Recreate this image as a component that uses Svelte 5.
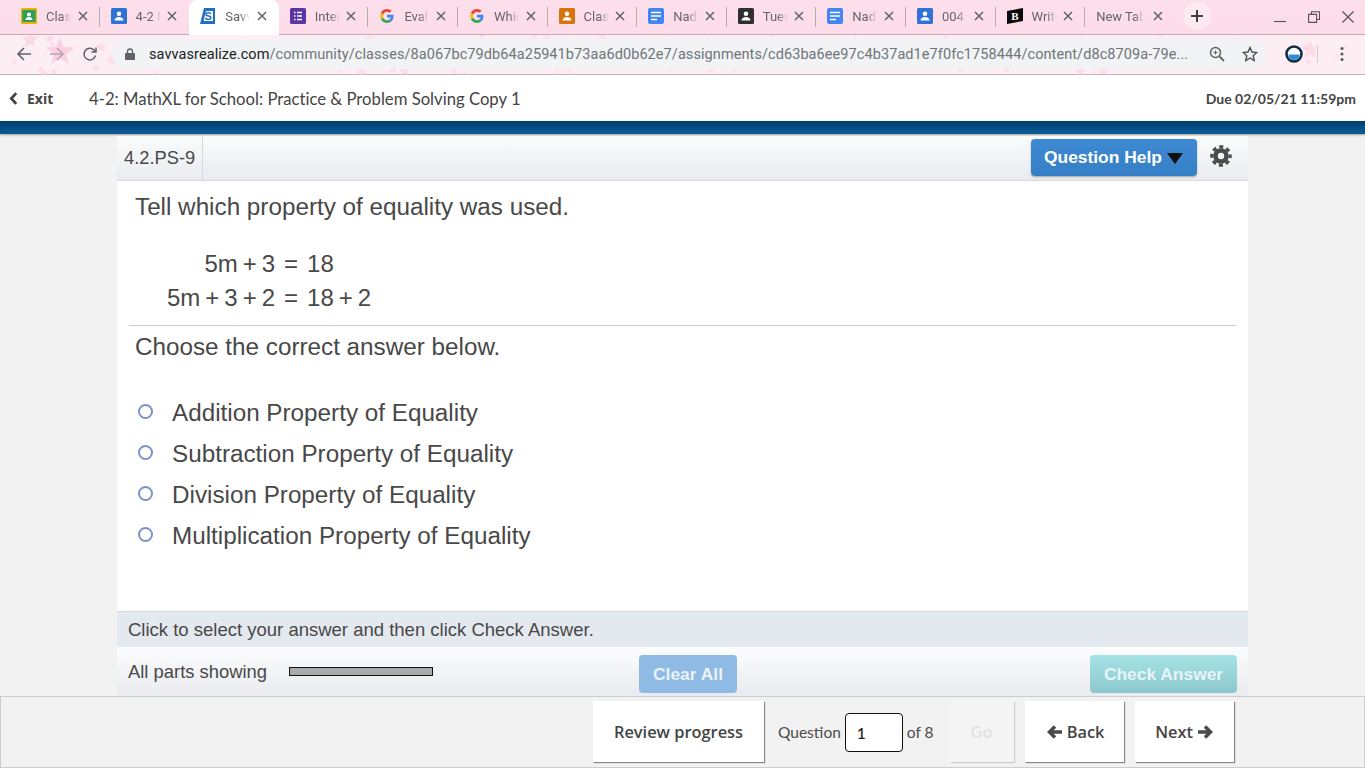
<script>
  const tabs = [
    { icon: 'classroom', title: 'Classes' },
    { icon: 'blue', title: '4-2 MathXL' },
    { icon: 'savvas', title: 'Savvas', active: true },
    { icon: 'forms', title: 'Interactive' },
    { icon: 'google', title: 'Evaluate' },
    { icon: 'google', title: 'Which' },
    { icon: 'orange', title: 'Classes' },
    { icon: 'docs', title: 'Nadia' },
    { icon: 'dark', title: 'Tuesday' },
    { icon: 'docs', title: 'Nadia' },
    { icon: 'blue', title: '004' },
    { icon: 'brainly', title: 'Write' },
    { icon: 'none', title: 'New Tab' }
  ];

  const answers = [
    'Addition Property of Equality',
    'Subtraction Property of Equality',
    'Division Property of Equality',
    'Multiplication Property of Equality'
  ];

  // scattered wallpaper stars behind the toolbar
  const stars = [];
  let seed = 17;
  const rnd = () => {
    seed = (seed * 9301 + 49297) % 233280;
    return seed / 233280;
  };
  for (let i = 0; i < 90; i++) {
    stars.push({ x: rnd() * 1365, y: 34 + rnd() * 40, r: 2 + rnd() * 5, o: 0.2 + rnd() * 0.4 });
  }
  stars.push({ x: 60, y: 52, r: 15, o: 0.8 }, { x: 30, y: 40, r: 9, o: 0.6 }, { x: 1310, y: 50, r: 10, o: 0.5 });

  const starPoints = (s) => {
    const pts = [];
    for (let i = 0; i < 10; i++) {
      const a = (Math.PI / 5) * i - Math.PI / 2;
      const d = i % 2 ? s.r * 0.42 : s.r;
      pts.push((s.x + Math.cos(a) * d).toFixed(1) + ',' + (s.y + Math.sin(a) * d).toFixed(1));
    }
    return pts.join(' ');
  };
</script>

<div class="page">
  <div class="browser">
    <svg class="wallpaper" width="1365" height="75" aria-hidden="true">
      {#each stars as s}
        <polygon points={starPoints(s)} fill="#f9c9dc" opacity={s.o} />
      {/each}
    </svg>

    <div class="tabstrip">
      {#each tabs as tab, i}
        <div class="tab" class:active={tab.active} class:nosep={tab.active || tabs[i + 1]?.active || i === tabs.length - 1}>
          {#if tab.icon !== 'none'}
            <svg class="favicon" viewBox="0 0 16 16" width="16" height="16">
              {#if tab.icon === 'classroom'}
                <rect width="16" height="16" rx="1" fill="#e3b30c" />
                <rect x="1.500" y="2" width="13" height="12" fill="#2e9e5b" />
                <circle cx="8" cy="6.500" r="2" fill="#fff" />
                <path d="M4.500 12c0-2 1.500-3 3.500-3s3.500 1 3.500 3z" fill="#fff" />
              {:else if tab.icon === 'blue' || tab.icon === 'orange' || tab.icon === 'dark'}
                <rect width="16" height="16" rx="1.500" fill={tab.icon === 'blue' ? '#2f72d8' : tab.icon === 'orange' ? '#d9730d' : '#2f2f2f'} />
                <circle cx="8" cy="5.800" r="2.300" fill="#fff" />
                <path d="M3.500 12.500c0-2.300 2-3.500 4.500-3.500s4.500 1.200 4.500 3.500z" fill="#fff" />
              {:else if tab.icon === 'savvas'}
                <path d="M4 0h11v16H0z" fill="#1f6fc4" />
                <path d="M6 3h7v10H3.500z" fill="#fff" />
                <text x="8.200" y="11.800" class="favtext">S</text>
              {:else if tab.icon === 'forms'}
                <rect width="16" height="16" rx="1.500" fill="#5b34a8" />
                <path d="M4 4.500h1.500M7 4.500h5M4 8h1.500M7 8h5M4 11.500h1.500M7 11.500h5" stroke="#fff" stroke-width="1.400" />
              {:else if tab.icon === 'docs'}
                <rect width="16" height="16" rx="2" fill="#4285f4" />
                <path d="M3 4.500h10M3 8h10M3 11.500h6" stroke="#fff" stroke-width="1.600" />
              {:else if tab.icon === 'google'}
                <path d="M14.500 8.200c0-.5 0-1-.1-1.400H8v2.700h3.700c-.2.900-.7 1.600-1.400 2.100l2.200 1.700c1.300-1.200 2-3 2-5.100z" fill="#4285f4" />
                <path d="M8 15c1.900 0 3.400-.6 4.500-1.700l-2.200-1.700c-.6.400-1.400.7-2.300.7-1.800 0-3.300-1.200-3.800-2.800L1.900 11.200C3 13.500 5.300 15 8 15z" fill="#34a853" />
                <path d="M4.200 9.500c-.3-.9-.3-1.900 0-2.800L1.900 4.900c-1 1.900-1 4.300 0 6.300z" fill="#fbbc05" />
                <path d="M8 3.800c1 0 1.900.3 2.600 1l2-2C11.400 1.700 9.800 1 8 1 5.300 1 3 2.500 1.900 4.800l2.300 1.800C4.700 5 6.200 3.800 8 3.800z" fill="#ea4335" />
              {:else if tab.icon === 'brainly'}
                <path d="M0 3l16-3v13L0 16z" fill="#0a0a0a" />
                <text x="8" y="11.500" class="favtext light">B</text>
              {/if}
            </svg>
          {/if}
          <span class="tabtitle" class:wide={tab.icon === 'none'}>{tab.title}</span>
          <svg class="tabclose" viewBox="0 0 10 10" width="10" height="10">
            <path d="M1 1l8 8M9 1l-8 8" stroke="#5f6368" stroke-width="1.500" fill="none" />
          </svg>
        </div>
      {/each}
      <div class="newtab">
        <svg viewBox="0 0 14 14" width="14" height="14"><path d="M7 1v12M1 7h12" stroke="#3c4043" stroke-width="2" /></svg>
      </div>
      <div class="winctl">
        <svg viewBox="0 0 12 12" width="12" height="12"><path d="M0 10.500h12" stroke="#555" stroke-width="1.200" /></svg>
        <svg viewBox="0 0 12 12" width="12" height="12"><path d="M3.500 3V.8h8v7.700H9M.6 3.400h8v8h-8z" stroke="#555" stroke-width="1.100" fill="none" /></svg>
        <svg viewBox="0 0 12 12" width="12" height="12"><path d="M.5.500l11 11M11.500.500l-11 11" stroke="#555" stroke-width="1.200" /></svg>
      </div>
    </div>

    <div class="toolbar">
      <svg viewBox="0 0 16 16" width="16" height="16" class="navicon"><path d="M15 8H2M8 2L2 8l6 6" stroke="#5f6368" stroke-width="1.600" fill="none" /></svg>
      <svg viewBox="0 0 16 16" width="16" height="16" class="navicon"><path d="M1 8h13M8 2l6 6-6 6" stroke="#b9a3ad" stroke-width="1.600" fill="none" /></svg>
      <svg viewBox="0 0 16 16" width="16" height="16" class="navicon"><path d="M13.500 9.500A5.800 5.800 0 1 1 12 4l1.500 1.500M14 1.500v4.500H9.500" stroke="#5f6368" stroke-width="1.500" fill="none" /></svg>
      <div class="omnibox">
        <svg viewBox="0 0 10 12" width="10" height="12"><path d="M2.500 5V3.500a2.500 2.500 0 0 1 5 0V5" stroke="#5f6368" stroke-width="1.300" fill="none" /><rect y="5" width="10" height="7" rx="1" fill="#5f6368" /></svg>
        <div class="url"><b>savvasrealize.com</b>/community/classes/8a067bc79db64a25941b73aa6d0b62e7/assignments/cd63ba6ee97c4b37ad1e7f0fc1758444/content/d8c8709a-79e...</div>
        <svg viewBox="0 0 16 16" width="16" height="16"><circle cx="6.500" cy="6.500" r="5" stroke="#5f6368" stroke-width="1.500" fill="none" /><path d="M10.500 10.500l4.500 4.500" stroke="#5f6368" stroke-width="1.800" /><path d="M4.500 6.500h4M6.500 4.500v4" stroke="#5f6368" stroke-width="1.100" /></svg>
        <svg viewBox="0 0 16 16" width="16" height="16"><path d="M8 1.500l2 4.500 4.800.5-3.600 3.200 1 4.800L8 12l-4.200 2.500 1-4.800L1.200 6.500 6 6z" stroke="#4d5156" stroke-width="1.400" fill="none" /></svg>
      </div>
      <svg class="ext" viewBox="0 0 18 18" width="18" height="18">
        <circle cx="9" cy="9" r="7.500" fill="#fff" stroke="#102a43" stroke-width="2.600" />
        <path d="M3.500 9.500h11a5.500 5.500 0 0 1-11 0z" fill="#2c8fd6" />
      </svg>
      <span class="toolsep"></span>
      <svg class="dots" viewBox="0 0 4 16" width="4" height="16"><circle cx="2" cy="2.500" r="1.500" fill="#555" /><circle cx="2" cy="8" r="1.500" fill="#555" /><circle cx="2" cy="13.500" r="1.500" fill="#555" /></svg>
    </div>
  </div>

  <header class="apphead">
    <a class="exit" href="#exit">
      <svg viewBox="0 0 8 12" width="9" height="13"><path d="M6.500 1L2 6l4.500 5" stroke="#444" stroke-width="2.600" fill="none" /></svg>
      Exit
    </a>
    <div class="assignment">4-2: MathXL for School: Practice &amp; Problem Solving Copy 1</div>
    <div class="due">Due 02/05/21 11:59pm</div>
  </header>
  <div class="bluebar"></div>

  <main class="stage">
    <section class="card">
      <div class="cardhead">
        <div class="qid">4.2.PS-9</div>
        <button class="help">Question Help <span class="caret"></span></button>
        <svg class="gear" viewBox="0 0 24 24" width="22" height="22">
          <circle cx="12" cy="12" r="10" fill="none" stroke="#4a4a4a" stroke-width="3.400" stroke-dasharray="4.400 3.454" stroke-dashoffset="2.200" />
          <circle cx="12" cy="12" r="6" fill="none" stroke="#4a4a4a" stroke-width="5" />
        </svg>
      </div>

      <div class="question">
        <p class="prompt">Tell which property of equality was used.</p>
        <div class="math">
          <span class="lhs">5m<i>+</i>3</span><span class="eq">=</span><span class="rhs">18</span>
          <span class="lhs">5m<i>+</i>3<i>+</i>2</span><span class="eq">=</span><span class="rhs">18<i>+</i>2</span>
        </div>
        <hr />
        <p class="choose">Choose the correct answer below.</p>
        <ul class="answers">
          {#each answers as a}
            <li><span class="radio"></span>{a}</li>
          {/each}
        </ul>
      </div>

      <div class="hint">Click to select your answer and then click Check Answer.</div>
      <div class="cardfoot">
        <span class="parts">All parts showing</span>
        <span class="progress"></span>
        <button class="clear">Clear All</button>
        <button class="check">Check Answer</button>
      </div>
    </section>
  </main>

  <nav class="pager">
    <button class="navbtn review">Review progress</button>
    <span class="qlabel">Question</span>
    <span class="qinput">1</span>
    <span class="qlabel">of 8</span>
    <button class="navbtn go">Go</button>
    <button class="navbtn back">
      <svg viewBox="0 0 16 14" width="16" height="14"><path d="M15 7H4M8 1.500L2.500 7 8 12.500" stroke="#4a4a4a" stroke-width="3.500" fill="none" /></svg>
      Back
    </button>
    <button class="navbtn next">
      Next
      <svg viewBox="0 0 16 14" width="16" height="14"><path d="M1 7h11M8 1.500L13.500 7 8 12.500" stroke="#4a4a4a" stroke-width="3.500" fill="none" /></svg>
    </button>
  </nav>
</div>

<style>
  :global(body) {
    background: #f2f2f2;
    overflow: hidden;
  }

  .page {
    display: flex;
    flex-direction: column;
    width: 1365px;
    height: 768px;
    overflow: hidden;
    font-family: "Liberation Sans", Arial, sans-serif;
    color: #484848;
  }

  /* browser chrome */
  .browser {
    position: relative;
    height: 75px;
    flex: none;
    background: #fdeef4;
    border-bottom: 1px solid #bfb4b9;
    box-sizing: border-box;
    font-family: Roboto, sans-serif;
  }

  .wallpaper {
    position: absolute;
    left: 0;
    top: 0;
  }

  .tabstrip {
    position: relative;
    display: flex;
    height: 35px;
    padding-left: 10px;
    box-sizing: border-box;
    background: linear-gradient(#fddfeb, #fcdce9);
    border-bottom: 1px solid #c2adb5;
  }

  .tab {
    position: relative;
    display: flex;
    align-items: center;
    width: 89.6px;
    height: 34px;
    flex: none;
    padding: 0 0 2px 11px;
    box-sizing: border-box;
    font-size: 13px;
    color: #666;
  }

  .tab::after {
    content: "";
    position: absolute;
    right: 0;
    top: 7px;
    height: 20px;
    width: 1px;
    background: #b9a9b0;
  }

  .tab.nosep::after {
    display: none;
  }

  .tab.active {
    height: 35px;
    padding-bottom: 3px;
    background: #fff;
    border-radius: 8px 8px 0 0;
    z-index: 1;
  }

  .favicon {
    flex: none;
    margin-right: 9px;
  }

  .favtext {
    font: bold 11px "Liberation Sans", sans-serif;
    fill: #1f6fc4;
    text-anchor: middle;
  }

  .favtext.light {
    font-family: "Liberation Serif", serif;
    fill: #fff;
  }

  .tabtitle {
    width: 25px;
    overflow: hidden;
    white-space: nowrap;
    -webkit-mask-image: linear-gradient(90deg, #000 60%, transparent);
    mask-image: linear-gradient(90deg, #000 60%, transparent);
  }

  .tabtitle.wide {
    width: 48px;
    -webkit-mask-image: linear-gradient(90deg, #000 80%, transparent);
    mask-image: linear-gradient(90deg, #000 80%, transparent);
  }

  .tabclose {
    position: absolute;
    right: 12px;
    top: 11px;
  }

  .newtab {
    display: flex;
    align-items: center;
    justify-content: center;
    width: 28px;
    height: 28px;
    margin: 2px 0 0 8px;
    border-radius: 50%;
    background: #fdeaf1;
  }

  .winctl {
    display: flex;
    align-items: center;
    gap: 22px;
    margin-left: auto;
    padding: 0 11px 0 0;
  }

  .toolbar {
    position: relative;
    display: flex;
    align-items: center;
    height: 38px;
    padding-left: 16px;
  }

  .navicon {
    margin-right: 17px;
  }

  .omnibox {
    display: flex;
    align-items: center;
    gap: 8px;
    width: 1154px;
    height: 30px;
    margin-left: -3px;
    padding: 0 8px 0 13px;
    box-sizing: border-box;
    border-radius: 15px;
    background: #f1f3f4;
  }

  .url {
    flex: 1;
    min-width: 0;
    margin-left: 6px;
    margin-right: 12px;
    overflow: hidden;
    white-space: nowrap;
    font-size: 14.5px;
    letter-spacing: 0.08px;
    color: #70757a;
  }

  .url b {
    font-weight: 400;
    color: #202124;
  }

  .omnibox svg:last-child {
    margin-left: 9px;
  }

  .ext {
    margin-left: 19px;
  }

  .toolsep {
    width: 1px;
    height: 18px;
    margin-left: 14px;
    background: #d9c9cf;
  }

  .dots {
    margin-left: 22px;
  }

  /* app header */
  .apphead {
    display: flex;
    align-items: center;
    height: 46px;
    flex: none;
    padding: 0 9px;
    background: #fff;
    font-family: Lato, sans-serif;
    color: #444;
  }

  .exit {
    display: flex;
    align-items: center;
    gap: 9px;
    width: 80px;
    font-family: "Open Sans", sans-serif;
    font-size: 14px;
    font-weight: 700;
    color: #444;
    text-decoration: none;
  }

  .assignment {
    padding-top: 1px;
    font-size: 16.7px;
    font-variant-ligatures: none;
  }

  .due {
    margin-left: auto;
    font-size: 14px;
    font-weight: 700;
  }

  .bluebar {
    height: 13px;
    flex: none;
    background: linear-gradient(#003f6e, #0b5c98);
    box-shadow: 0 1px 2px rgba(90, 70, 50, 0.5);
  }

  /* question card */
  .stage {
    flex: 1;
    min-height: 0;
    padding: 2px 117px 0;
  }

  .card {
    display: flex;
    flex-direction: column;
    height: 100%;
    background: #fff;
  }

  .cardhead {
    display: flex;
    align-items: center;
    height: 45px;
    flex: none;
    box-sizing: border-box;
    border-bottom: 1px solid #d5d8dc;
    background: linear-gradient(#fafbfc, #e9ebef);
  }

  .qid {
    display: flex;
    align-items: center;
    align-self: stretch;
    padding: 0 7px;
    border-right: 1px solid #d5d8dc;
    font-size: 18.3px;
    color: #484848;
  }

  button {
    font-family: inherit;
    border: 0;
    cursor: pointer;
  }

  .help {
    display: flex;
    align-items: center;
    gap: 5px;
    width: 166px;
    height: 37px;
    margin: 0 0 2px auto;
    padding: 1px 0 0 13px;
    box-sizing: border-box;
    border-radius: 4px;
    background: linear-gradient(#3e8ad2, #357fc6);
    box-shadow: 0 1px 2px rgba(0, 0, 0, 0.3);
    font-size: 17.4px;
    font-weight: 700;
    color: #fff;
  }

  .caret {
    width: 0;
    height: 0;
    border-left: 8px solid transparent;
    border-right: 8px solid transparent;
    border-top: 11px solid #111;
    margin-top: 2px;
  }

  .gear {
    margin: 0 16px 4px 13px;
  }

  .question {
    flex: 1;
    min-height: 0;
    padding: 0 12px;
  }

  .prompt,
  .choose {
    margin: 0;
    padding-left: 6px;
    font-size: 24.25px;
    line-height: 28px;
  }

  .prompt {
    padding-top: 12px;
  }

  .math {
    display: grid;
    grid-template-columns: max-content max-content max-content;
    column-gap: 9px;
    row-gap: 6px;
    margin: 29px 0 0 38px;
    font-size: 24px;
    line-height: 28px;
  }

  .math .lhs {
    justify-self: end;
  }

  .math i {
    font-style: normal;
    margin: 0 5px;
  }

  hr {
    height: 1px;
    margin: 13px 0 7px;
    border: 0;
    background: #ccc;
  }

  .answers {
    list-style: none;
    margin: 31px 0 0;
    padding: 0 0 0 9px;
    font-size: 24.25px;
  }

  .answers li {
    display: flex;
    align-items: center;
    height: 41px;
  }

  .radio {
    width: 11px;
    height: 11px;
    margin: -2px 19px 0 0;
    border: 2px solid #7a94c8;
    border-radius: 50%;
  }

  .hint {
    display: flex;
    align-items: center;
    height: 36px;
    flex: none;
    padding: 1px 0 0 11px;
    box-sizing: border-box;
    border-top: 1px solid #d3d7dd;
    background: #e4e8ef;
    font-size: 18.5px;
  }

  .cardfoot {
    display: flex;
    align-items: center;
    height: 49px;
    flex: none;
    padding: 0 11px;
    box-sizing: border-box;
    background: linear-gradient(#fbfcfd, #e9ebf0);
  }

  .parts {
    font-size: 18.4px;
  }

  .progress {
    width: 144px;
    height: 9px;
    margin-left: 22px;
    box-sizing: border-box;
    border: 1px solid #111;
    background: #aaa;
  }

  .clear,
  .check {
    height: 38px;
    margin-top: 5px;
    border-radius: 4px;
    font-size: 17.4px;
    font-weight: 700;
    color: #e8f3f8;
  }

  .clear {
    width: 98px;
    margin-left: 206px;
    background: #8fbae3;
  }

  .check {
    width: 147px;
    margin-left: auto;
    background: linear-gradient(#a5e2e5, #8cc8cd);
  }

  /* bottom pager */
  .pager {
    display: flex;
    align-items: center;
    height: 72px;
    flex: none;
    padding: 0 0 2px 592px;
    box-sizing: border-box;
    border: 1px solid #ccc;
    background: #f2f2f2;
    font-family: Lato, sans-serif;
    font-size: 15.5px;
    color: #4a4a4a;
  }

  .qlabel {
    margin-top: 2px;
  }

  .navbtn {
    display: flex;
    align-items: center;
    justify-content: center;
    gap: 4px;
    height: 61px;
    padding: 1px 0 0;
    background: #fff;
    box-shadow: 1px 1px 1px #888;
    font-family: "Open Sans", sans-serif;
    font-size: 16.4px;
    font-weight: 600;
    color: #444;
  }

  .review {
    width: 171px;
    margin-right: 14px;
  }

  .qinput {
    display: flex;
    align-items: center;
    width: 58px;
    height: 39px;
    margin: 3px 4px 0;
    padding-left: 11px;
    box-sizing: border-box;
    border: 1px solid #111;
    border-radius: 4px;
    background: #fff;
    font-weight: 500;
    color: #222;
  }

  .go {
    width: 64px;
    margin-left: 16px;
    background: #f4f4f4;
    box-shadow: 1px 1px 1px #ccc;
    color: #e2e2e2;
  }

  .back {
    width: 99px;
    margin-left: 11px;
    padding-left: 3px;
  }

  .next {
    width: 99px;
    margin-left: 11px;
  }
</style>
